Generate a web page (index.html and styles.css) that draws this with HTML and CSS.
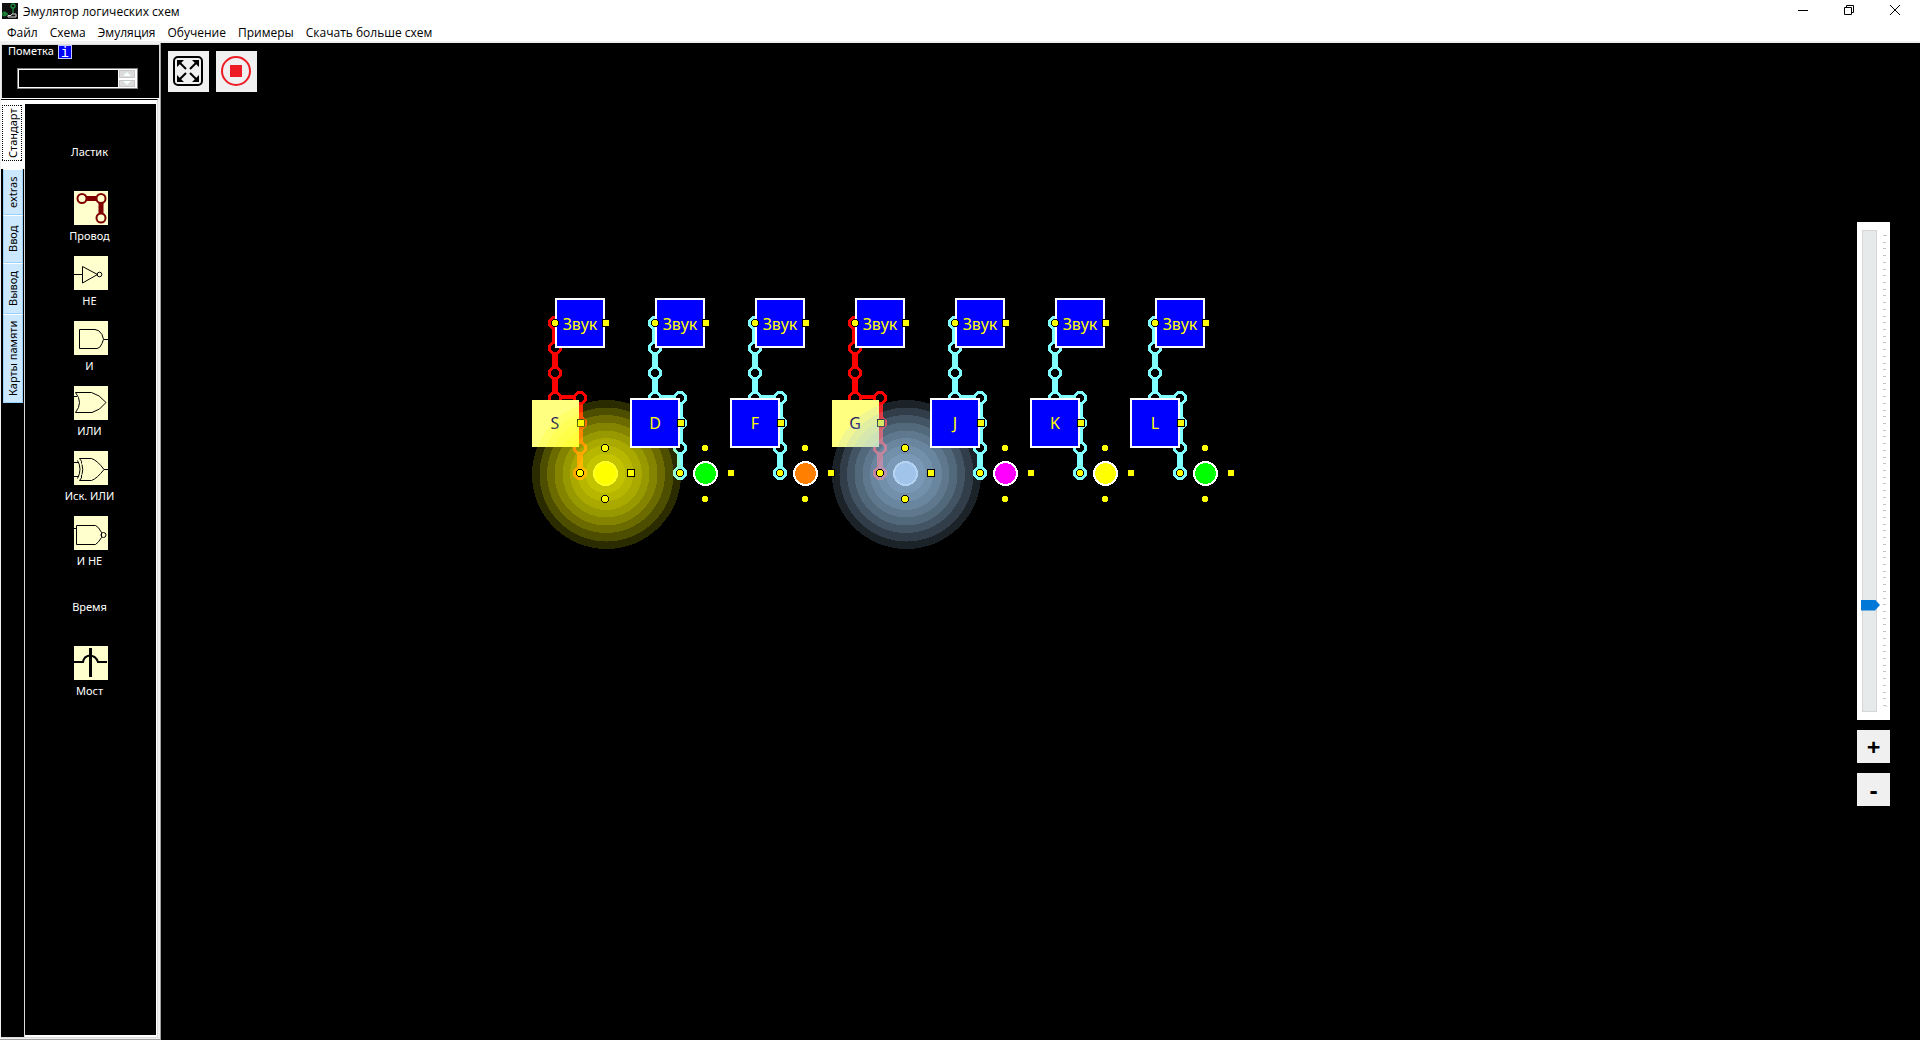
FILE: index.html
```html
<!DOCTYPE html>
<html lang="ru">
<head>
<meta charset="utf-8">
<title>Эмулятор логических схем</title>
<link rel="stylesheet" href="styles.css">
</head>
<body>
<header class="titlebar">
  <svg class="app-icon" width="16" height="16" viewBox="0 0 16 16" aria-hidden="true">
    <rect width="16" height="16" fill="#111"/>
    <g fill="none" stroke="#1c8a3c" stroke-width="1.3">
      <circle cx="11" cy="3" r="2"/><path d="M11 5v6M2.500 12V9M3 11h3"/><circle cx="2.500" cy="11" r="1.800"/>
    </g>
    <path d="M6 12.500h3l1-1.500h4v3h-8z" fill="none" stroke="#ddd"/>
  </svg>
  <h1 class="app-title">Эмулятор логических схем</h1>
  <div class="window-controls">
    <button type="button" aria-label="Свернуть"><svg width="10" height="10"><path d="M0 5.500h10"/></svg></button>
    <button type="button" aria-label="Восстановить"><svg width="10" height="10"><path d="M.5 2.500h7v7h-7zM2.500 2.500v-2h7v7h-2"/></svg></button>
    <button type="button" aria-label="Закрыть"><svg width="10" height="10"><path d="M0 0l10 10M10 0L0 10"/></svg></button>
  </div>
</header>
<nav class="menubar">
  <a href="#">Файл</a><a href="#">Схема</a><a href="#">Эмуляция</a><a href="#">Обучение</a><a href="#">Примеры</a><a href="#">Скачать больше схем</a>
</nav>
<div class="workspace">
  <aside class="sidebar">
    <div class="marker">
      <div class="marker-head"><label for="mark">Пометка</label><button type="button" class="info">i</button></div>
      <div class="spin">
        <input id="mark" type="text">
        <div class="spin-buttons">
          <button type="button" aria-label="Больше"><svg width="8" height="4"><path d="M0 4l4-4 4 4z"/></svg></button>
          <button type="button" aria-label="Меньше"><svg width="8" height="4"><path d="M0 0l4 4 4-4z"/></svg></button>
        </div>
      </div>
    </div>
    <div class="library">
      <div class="tabs">
        <button type="button" class="tab active"><span>Стандарт</span></button>
        <button type="button" class="tab extras">extras</button>
        <button type="button" class="tab input">Ввод</button>
        <button type="button" class="tab output">Вывод</button>
        <button type="button" class="tab cards">Карты памяти</button>
      </div>
      <div class="parts">
        <button type="button" class="part plain">Ластик</button>
        <button type="button" class="part"><svg width="34" height="34"><g fill="none" stroke="#800000" stroke-width="2"><path d="M11 7.500h13M27 11v12" stroke-width="5"/><g fill="#ffffce"><circle cx="8" cy="7.500" r="4.500"/><circle cx="27" cy="7.500" r="4.500"/><circle cx="27" cy="27" r="4.500"/></g></g></svg>Провод</button>
        <button type="button" class="part"><svg width="34" height="34"><path d="M0 18.500h8.500M8.500 10.500v16.500l15-8.500z"/><circle cx="25.500" cy="18.500" r="2.300"/></svg>НЕ</button>
        <button type="button" class="part"><svg width="34" height="34"><path d="M5.500 8.500h15.500q4 0 7 5t0 9q-2 5-5 5H5.500zM30 18.500h4"/></svg>И</button>
        <button type="button" class="part"><svg width="34" height="34"><path d="M0 10.500h3M1.500 6.500h16q8 2 14.500 10-6 8-14 10H1.500q8-10 0-20z"/></svg>ИЛИ</button>
        <button type="button" class="part"><svg width="34" height="34"><path d="M0 11.500h5M0 25.500h5M3.500 9.500q5 8.500 0 18M8 13.500q1.500 5 0 10M5.500 7.500h12q6 2 12.500 11-7 9-12.500 11h-12M5.500 7.500q3 3 2 5M7.500 24q1 3-2 5.500M30 18.500h4"/></svg>Иск. ИЛИ</button>
        <button type="button" class="part"><svg width="34" height="34"><path d="M0 12.500h2.500M2.500 9.500h19q3 1 6 7v5q-3 5-6 7h-19z"/><circle cx="29.500" cy="19" r="2.500"/></svg>И НЕ</button>
        <button type="button" class="part plain">Время</button>
        <button type="button" class="part"><svg width="34" height="34"><path d="M0 16h9q1-6 7-6.500 6 .5 8 6.500h9" stroke-width="2"/><path d="M16.500 2v29" stroke-width="3"/></svg>Мост</button>
      </div>
    </div>
  </aside>
  <main class="board">
    <svg class="circuit" role="img" aria-label="Схема" shape-rendering="crispEdges">
      <defs>
        <g id="wire">
          <path d="M0 25V100M25 100V175" fill="none" stroke="currentColor" stroke-width="6"/>
          <path d="M0 99H25" fill="none" stroke="currentColor" stroke-width="4"/>
          <g fill="#000" stroke="currentColor" stroke-width="3">
            <circle cx="0" cy="25" r="5.500"/><circle cx="0" cy="50" r="5.500"/><circle cx="0" cy="75" r="5.500"/><circle cx="0" cy="100" r="5.500"/>
            <circle cx="25" cy="100" r="5.500"/><circle cx="25" cy="125" r="5.500"/><circle cx="25" cy="150" r="5.500"/><circle cx="25" cy="175" r="5.500"/>
          </g>
        </g>
        <g id="sound">
          <rect x="1" y="1" width="48" height="48" fill="#00f" stroke="#fff" stroke-width="2"/>
          <circle class="pin" cx="0" cy="25" r="3.500"/><rect class="pin" x="47.500" y="21.500" width="7" height="7"/>
          <text class="caption" x="25" y="32">Звук</text>
        </g>
        <g id="key"><rect x="-24" y="101" width="48" height="48" fill="#00f" stroke="#fff" stroke-width="2"/></g>
        <rect id="key-lit" x="-23" y="102" width="47" height="47" fill="#ffff80"/>
        <rect id="key-pin" class="pin" x="22.500" y="121.500" width="7" height="7"/>
        <circle id="lamp" cx="50.500" cy="175.500" r="11.500" stroke="#fff" stroke-width="2"/>
        <g id="glow" fill="currentColor" fill-opacity=".17">
          <circle cx="51.500" cy="176.500" r="74.500"/><circle cx="51.500" cy="176.500" r="67"/><circle cx="51" cy="176" r="59"/><circle cx="51" cy="176" r="51.500"/><circle cx="51" cy="176" r="43.500"/><circle cx="51" cy="176" r="36"/><circle cx="50.500" cy="175.500" r="28"/><circle cx="50.500" cy="175.500" r="20"/><circle cx="50.500" cy="175.500" r="12.500"/>
        </g>
        <g id="lamp-pins">
          <circle class="pin" cx="25" cy="175" r="3.500"/><circle class="pin" cx="50" cy="150" r="3.500"/><circle class="pin" cx="50" cy="201" r="3.500"/><rect class="pin" x="72.500" y="171.500" width="7" height="7"/>
        </g>
      </defs>
      <g transform="translate(394 255)" color="#f00"><use href="#wire"/></g>
      <g transform="translate(494 255)" color="#80ffff"><use href="#wire"/></g>
      <g transform="translate(394 255)">
        <use href="#sound"/><use href="#key-lit"/><text class="caption dark" x="0" y="131">S</text><use href="#key-pin"/>
        <use href="#glow" color="#ff0"/><circle cx="50.500" cy="175.500" r="11.500" fill="#ff0" stroke="#ffff20" stroke-width="2"/><use href="#lamp-pins"/>
      </g>
      <g transform="translate(494 255)">
        <use href="#sound"/><use href="#key"/><text class="caption" x="0" y="131">D</text><use href="#key-pin"/>
        <use href="#lamp" fill="#0f0"/><use href="#lamp-pins"/>
      </g>
      <g transform="translate(594 255)" color="#80ffff">
        <use href="#wire"/><use href="#sound"/><use href="#key"/><text class="caption" x="0" y="131">F</text><use href="#key-pin"/>
        <use href="#lamp" fill="#ff8000"/>
      </g>
      <g transform="translate(694 255)" color="#f00">
        <use href="#wire"/><use href="#sound"/><use href="#key-lit"/><text class="caption dark" x="0" y="131">G</text><use href="#key-pin"/>
        <use href="#glow" color="#a0c8f0"/><circle cx="50.500" cy="175.500" r="11.500" fill="#a0c4ea" stroke="#b4d2f2" stroke-width="2"/><use href="#lamp-pins"/>
      </g>
      <use href="#lamp-pins" x="594" y="255"/>
      <g transform="translate(794 255)" color="#80ffff">
        <use href="#wire"/><use href="#sound"/><use href="#key"/><text class="caption" x="0" y="131">J</text><use href="#key-pin"/>
        <use href="#lamp" fill="#f0f"/><use href="#lamp-pins"/>
      </g>
      <g transform="translate(894 255)" color="#80ffff">
        <use href="#wire"/><use href="#sound"/><use href="#key"/><text class="caption" x="0" y="131">K</text><use href="#key-pin"/>
        <use href="#lamp" fill="#ff0"/><use href="#lamp-pins"/>
      </g>
      <g transform="translate(994 255)" color="#80ffff">
        <use href="#wire"/><use href="#sound"/><use href="#key"/><text class="caption" x="0" y="131">L</text><use href="#key-pin"/>
        <use href="#lamp" fill="#0f0"/><use href="#lamp-pins"/>
      </g>
    </svg>
    <div class="tools">
      <button type="button" class="tool" aria-label="Во весь экран"><svg width="41" height="41"><rect x="6" y="6" width="28" height="28" rx="4" fill="none" stroke="#000" stroke-width="2"/><path d="M10 10l8 8M30 10l-8 8M10 30l8-8M30 30l-8-8" stroke="#000" stroke-width="2"/><path d="M9 9h7l-7 7zM31 9v7l-7-7zM9 31v-7l7 7zM31 31h-7l7-7z"/></svg></button>
      <button type="button" class="tool" aria-label="Остановить"><svg width="41" height="41"><circle cx="20" cy="20" r="14" fill="none" stroke="#ed1c24" stroke-width="2"/><path d="M14 14h12v12H14z" fill="#ed1c24"/></svg></button>
    </div>
    <div class="zoom">
      <div class="zoom-slider">
        <input type="range" min="0" max="70" value="15" aria-label="Масштаб">
        <svg class="ticks" width="4" height="472" shape-rendering="crispEdges"><path d="M1.500 0V472" stroke="#c4c4c4" stroke-width="3" stroke-dasharray="1 5.714"/><path d="M3 .5h1M3 471.500h1" stroke="#c4c4c4"/></svg>
      </div>
      <button type="button" class="zoom-button">+</button>
      <button type="button" class="zoom-button">-</button>
    </div>
  </main>
</div>
</body>
</html>
```
FILE: styles.css
```css
* { box-sizing: border-box; }

body {
  margin: 0;
  height: 100vh;
  display: flex;
  flex-direction: column;
  overflow: hidden;
  background: #fff;
  color: #000;
  font: 12px/16px "Open Sans", "Noto Sans", sans-serif;
}

button {
  margin: 0;
  padding: 0;
  border: 0;
  background: none;
  color: inherit;
  font: inherit;
}

svg { display: block; }

.titlebar { display: flex; height: 22px; padding: 0 2px; gap: 5px; }
.app-icon { margin-top: 3px; }
.app-title { margin: 4px 0 0; font-size: 12px; font-weight: 400; }
.window-controls { display: flex; margin-left: auto; }
.window-controls button { width: 46px; height: 20px; display: grid; place-items: center; }
.window-controls svg { fill: none; stroke: #000; }

.menubar {
  display: flex;
  gap: 12px;
  height: 21px;
  padding: 3px 7px 0;
  border-bottom: 2px solid #f0f0f0;
}
.menubar a { color: #000; text-decoration: none; }

.workspace { flex: 1; min-height: 0; display: flex; }

.sidebar {
  flex: none;
  width: 161px;
  display: flex;
  flex-direction: column;
  background: #f0f0f0;
  border-right: 1px solid #a0a0a0;
  border-bottom: 1px solid #a0a0a0;
  font: 11px/14px "Noto Sans", sans-serif;
}

.marker {
  height: 55px;
  margin: 1px 0 0 1px;
  background: #000;
  color: #fff;
  border: 1px solid #dcdcdc;
  border-bottom-color: #fff;
}
.marker-head { display: flex; gap: 4px; padding-left: 6px; }
.marker-head label { line-height: 12px; }
.info { width: 14px; height: 14px; background: #00f; border: 1px solid #c8c8ff; font: 14px/12px "DejaVu Sans Mono", monospace; }
.spin {
  display: flex;
  width: 121px;
  height: 21px;
  margin: 9px 0 0 15px;
  border: 1px solid #808080;
  background: #fff;
  padding: 1px;
}
.spin input { flex: 1; min-width: 0; padding: 0; border: 0; background: #000; color: #fff; }
.spin-buttons { display: flex; flex-direction: column; gap: 2px; width: 18px; padding: 0 1px; }
.spin-buttons button { flex: 1; display: grid; place-items: center; background: #dcdcdc; border: 1px solid #c8c8c8; }
.spin-buttons svg { fill: #f4ffff; }

.library {
  flex: 1;
  min-height: 0;
  display: flex;
  margin: 0 2px 1px 1px;
  border: 1px solid #dcdcdc;
  border-left: 0;
  border-top-color: #000;
  background: #000;
}

.tabs { width: 24px; display: flex; flex-direction: column; border-right: 1px solid #dcdcdc; }
.tab {
  width: 20px;
  margin-left: 2px;
  border: 1px solid #99d1ff;
  border-bottom-color: #fff;
  background: #cce8ff;
  color: #000;
  writing-mode: vertical-rl;
  transform: rotate(180deg);
}
.tab.active { width: 24px; height: 69px; margin: 0; padding: 8px 1px 4px 2px; background: #fff; border: 0; }
.tab.active span { display: block; width: 20px; height: 56px; border: 1px dotted #000; line-height: 18px; text-align: center; }
.extras { height: 46px; }
.input { height: 48px; }
.output { height: 51px; }
.cards { height: 89px; }

.parts {
  flex: 1;
  display: flex;
  flex-direction: column;
  padding: 22px 2px 0 0;
  border: solid #fff;
  border-width: 4px 1px 2px 0;
  background: #000;
  color: #fff;
}
.part { height: 65px; display: flex; flex-direction: column; align-items: center; gap: 4px; }
.part.plain { padding-top: 19px; }
.part svg { background: #ffffce; fill: none; stroke: #000; margin-left: 3px; }

.board { flex: 1; position: relative; display: flex; justify-content: space-between; background: #000; }
.circuit { position: absolute; inset: 0; width: 100%; height: 100%; }
.pin { fill: #ff0; stroke: #000; stroke-width: 1px; }
.caption { font: 16px "Noto Sans", sans-serif; fill: #ff0; text-anchor: middle; }
.caption.dark { fill: #202060; }

.tools { position: relative; display: flex; align-items: flex-start; gap: 7px; padding: 8px 7px; }
.tool { background: #f0f0f0; }

.zoom { position: relative; display: flex; flex-direction: column; gap: 10px; padding: 179px 30px 0 0; }
.zoom-slider { display: flex; gap: 5px; width: 33px; height: 498px; padding: 8px 3px 8px 4px; background: #fff; }
.zoom-slider input {
  appearance: none;
  writing-mode: vertical-lr;
  direction: rtl;
  width: 17px;
  height: 482px;
  margin: 0;
  background: none;
}
.zoom-slider input::-webkit-slider-runnable-track {
  width: 15px;
  height: 482px;
  padding: 0;
  background: #e7eaea;
  border: 1px solid #d6d6d6;
}
.zoom-slider input::-webkit-slider-thumb {
  appearance: none;
  width: 19px;
  height: 11px;
  margin-left: -2px;
  background: #0078d7;
  clip-path: polygon(0 0, 14px 0, 100% 50%, 14px 100%, 0 100%);
}
.ticks { margin-top: 5px; flex: none; }
.zoom-button { width: 33px; height: 33px; background: #f0f0f0; font: bold 24px/33px "Noto Sans", sans-serif; }
```
